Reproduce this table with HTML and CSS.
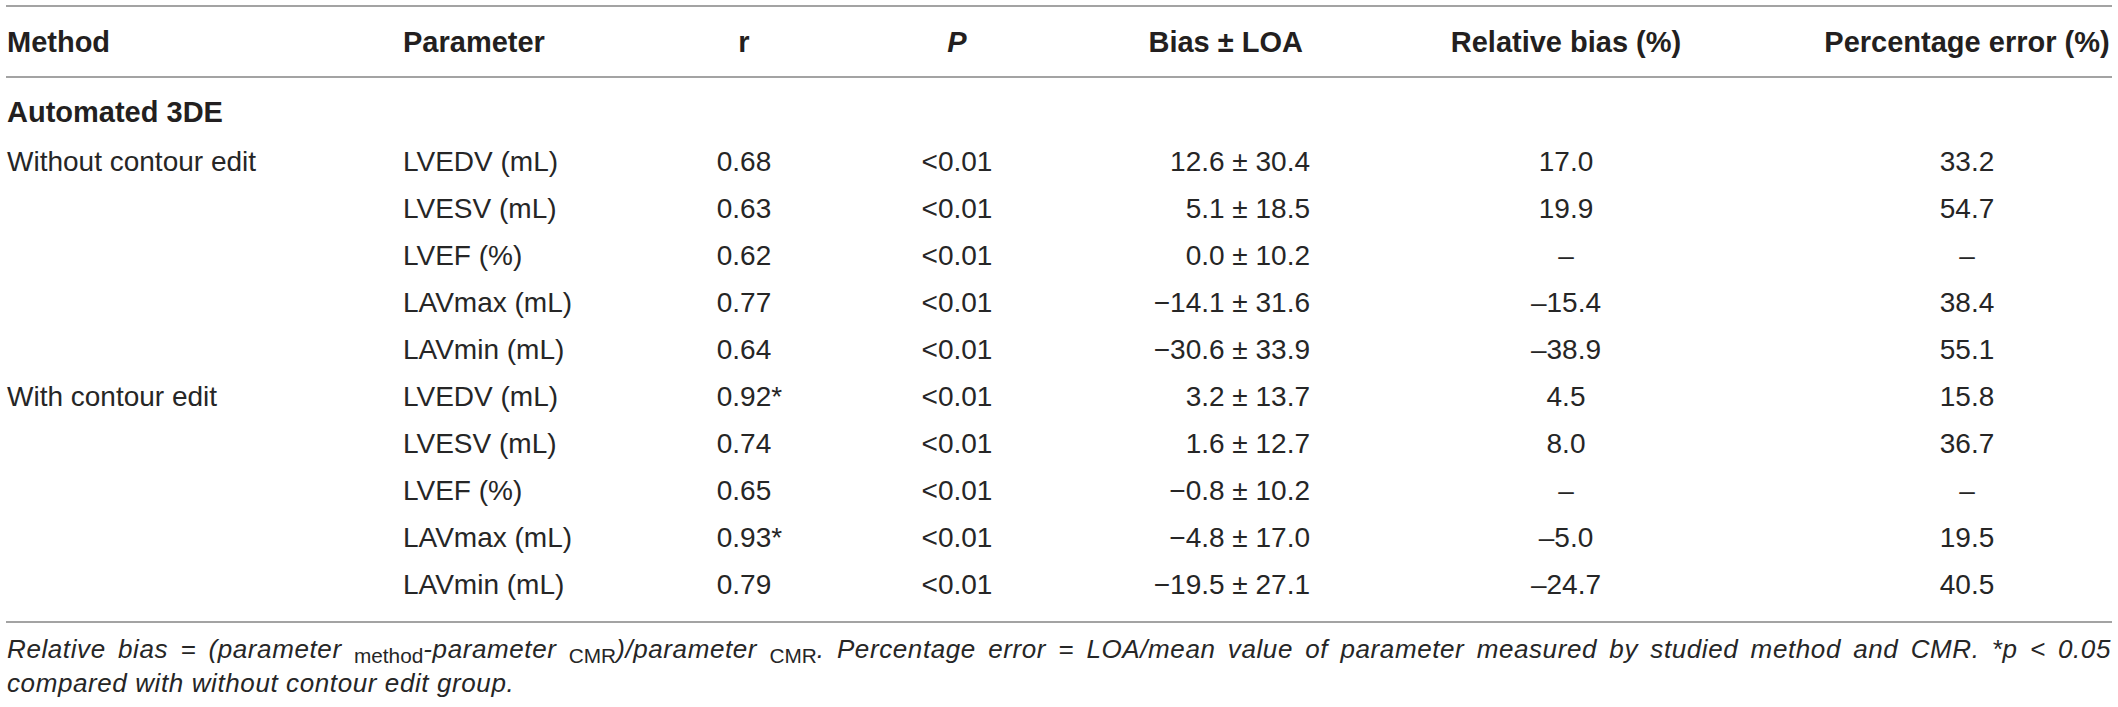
FILE: index.html
```html
<!DOCTYPE html>
<html lang="en">
<head>
<meta charset="utf-8">
<title>Table</title>
<link rel="stylesheet" href="styles.css">
</head>
<body>
<div class="wrap">
  <table class="data">
    <colgroup>
      <col class="c1"><col class="c2"><col class="c3"><col class="c4"><col class="c5"><col class="c6"><col class="c7">
    </colgroup>
    <thead>
      <tr>
        <th class="left first">Method</th>
        <th class="left param">Parameter</th>
        <th class="ctr">r</th>
        <th class="ctr"><i>P</i></th>
        <th class="right bias-h">Bias ± LOA</th>
        <th class="ctr">Relative bias (%)</th>
        <th class="ctr">Percentage error (%)</th>
      </tr>
    </thead>
    <tbody>
      <tr class="group"><td class="first" colspan="7">Automated 3DE</td></tr>
      <tr><td class="first">Without contour edit</td><td class="param">LVEDV (mL)</td><td class="ctr">0.68</td><td class="ctr">&lt;0.01</td><td class="right">12.6 ± 30.4</td><td class="ctr">17.0</td><td class="ctr">33.2</td></tr>
      <tr><td class="first"></td><td class="param">LVESV (mL)</td><td class="ctr">0.63</td><td class="ctr">&lt;0.01</td><td class="right">5.1 ± 18.5</td><td class="ctr">19.9</td><td class="ctr">54.7</td></tr>
      <tr><td class="first"></td><td class="param">LVEF (%)</td><td class="ctr">0.62</td><td class="ctr">&lt;0.01</td><td class="right">0.0 ± 10.2</td><td class="ctr">–</td><td class="ctr">–</td></tr>
      <tr><td class="first"></td><td class="param">LAVmax (mL)</td><td class="ctr">0.77</td><td class="ctr">&lt;0.01</td><td class="right">−14.1 ± 31.6</td><td class="ctr">–15.4</td><td class="ctr">38.4</td></tr>
      <tr><td class="first"></td><td class="param">LAVmin (mL)</td><td class="ctr">0.64</td><td class="ctr">&lt;0.01</td><td class="right">−30.6 ± 33.9</td><td class="ctr">–38.9</td><td class="ctr">55.1</td></tr>
      <tr><td class="first">With contour edit</td><td class="param">LVEDV (mL)</td><td class="ctr">0.92<span class="star">*</span></td><td class="ctr">&lt;0.01</td><td class="right">3.2 ± 13.7</td><td class="ctr">4.5</td><td class="ctr">15.8</td></tr>
      <tr><td class="first"></td><td class="param">LVESV (mL)</td><td class="ctr">0.74</td><td class="ctr">&lt;0.01</td><td class="right">1.6 ± 12.7</td><td class="ctr">8.0</td><td class="ctr">36.7</td></tr>
      <tr><td class="first"></td><td class="param">LVEF (%)</td><td class="ctr">0.65</td><td class="ctr">&lt;0.01</td><td class="right">−0.8 ± 10.2</td><td class="ctr">–</td><td class="ctr">–</td></tr>
      <tr><td class="first"></td><td class="param">LAVmax (mL)</td><td class="ctr">0.93<span class="star">*</span></td><td class="ctr">&lt;0.01</td><td class="right">−4.8 ± 17.0</td><td class="ctr">–5.0</td><td class="ctr">19.5</td></tr>
      <tr class="last"><td class="first"></td><td class="param">LAVmin (mL)</td><td class="ctr">0.79</td><td class="ctr">&lt;0.01</td><td class="right">−19.5 ± 27.1</td><td class="ctr">–24.7</td><td class="ctr">40.5</td></tr>
    </tbody>
  </table>
  <p class="note"><span class="note-l1">Relative bias = (parameter <span class="sub">method</span>-parameter <span class="sub">CMR</span>)/parameter <span class="sub">CMR</span>. Percentage error = LOA/mean value of parameter measured by studied method and CMR. *p &lt; 0.05</span> compared with without contour edit group.</p>
</div>
</body>
</html>
```

FILE: styles.css
```css
html, body {
  margin: 0;
  padding: 0;
  background: #ffffff;
}

body {
  font-family: "Liberation Sans", Arial, Helvetica, sans-serif;
  color: #231f20;
}

.wrap {
  padding: 5px 6px 0 6px;
  width: 2106px;
}

.data {
  border-collapse: separate;
  border-spacing: 0;
  table-layout: fixed;
  width: 2106px;
}

.c1 { width: 390px; }
.c2 { width: 244px; }
.c3 { width: 208px; }
.c4 { width: 218px; }
.c5 { width: 244px; }
.c6 { width: 512px; }
.c7 { width: 290px; }

.data th,
.data td {
  padding: 0;
  font-size: 28px;
  line-height: 47px;
  white-space: nowrap;
  vertical-align: top;
}

.data td {
  color: #262626;
}

.data th {
  font-size: 29px;
  font-weight: 700;
  border-top: 2px solid #a3a3a3;
  border-bottom: 2px solid #a3a3a3;
  padding-top: 12px;
  padding-bottom: 10px;
}

.data th i {
  font-style: italic;
}

.left { text-align: left; }
.ctr { text-align: center; }
.right { text-align: right; }

.first { padding-left: 1px !important; text-align: left; }
.param { padding-left: 7px !important; text-align: left; }
.bias-h { padding-right: 7px !important; }

.group td {
  font-weight: 700;
  font-size: 29px;
  color: #231f20;
  padding-top: 11px;
  padding-bottom: 2px;
}

.last td {
  padding-bottom: 13px;
  border-bottom: 2px solid #a3a3a3;
}

.star {
  margin-right: -0.389em;
}

.note {
  margin: 9px 0 0 1px;
  width: 2104px;
  font-size: 26px;
  line-height: 34px;
  font-style: italic;
  letter-spacing: 0.6px;
  color: #262626;
}

.note-l1 {
  display: block;
  text-align: justify;
  text-align-last: justify;
}

.sub {
  font-style: normal;
  font-size: 0.8em;
  letter-spacing: 0;
  vertical-align: -0.25em;
  line-height: 0;
}
```
